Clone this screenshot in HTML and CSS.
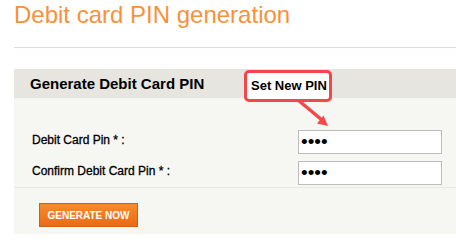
FILE: index.html
```html
<!DOCTYPE html>
<html>
<head>
<meta charset="utf-8">
<link rel="stylesheet" href="styles.css">
</head>
<body>
<h1 class="title">Debit card PIN generation</h1>
<div class="divider"></div>
<div class="panel">
  <div class="panel-head">Generate Debit Card PIN</div>
  <div class="panel-body">
    <form class="fields">
      <label class="lbl" for="pin1">Debit Card Pin * :</label>
      <input class="pin" id="pin1" type="password" value="1234">
      <label class="lbl" for="pin2">Confirm Debit Card Pin * :</label>
      <input class="pin" id="pin2" type="password" value="1234">
    </form>
    <div class="sep"></div>
    <div class="actions">
      <button class="btn" type="button">GENERATE NOW</button>
    </div>
  </div>
</div>
<svg class="arrow" width="50" height="32" viewBox="0 0 50 32">
  <line x1="8" y1="2" x2="32" y2="22" stroke="#f4474a" stroke-width="3.5"/>
  <polygon points="38,28 27,25.5 33.5,17.5" fill="#f4474a"/>
</svg>
<div class="callout">Set New PIN</div>
</body>
</html>
```

FILE: styles.css
```css
html, body {
  margin: 0;
  padding: 0;
  background: #ffffff;
  font-family: "Liberation Sans", Arial, sans-serif;
  width: 456px;
  height: 234px;
  overflow: hidden;
  position: relative;
}
.title {
  margin: 0 0 0 14px;
  font-size: 24px;
  font-weight: normal;
  line-height: 30px;
  color: #f7923a;
  white-space: nowrap;
}
.divider {
  margin: 17px 0 0 14px;
  height: 1px;
  background: #dcdcdc;
  box-shadow: 0 3px 7px rgba(0, 0, 0, 0.07);
}
.panel {
  margin: 21px 0 0 14px;
  background: #f6f6f2;
  height: 165px;
}
.panel-head {
  height: 29px;
  line-height: 29px;
  padding-left: 16px;
  background: #e6e5df;
  font-size: 15px;
  font-weight: bold;
  color: #000;
}
.fields {
  display: grid;
  grid-template-columns: 266px 144px;
  row-gap: 7px;
  margin: 0;
  padding: 32px 0 0 18px;
}
.lbl {
  font-size: 12px;
  line-height: 14px;
  margin-top: 3px;
  color: #000;
  -webkit-text-stroke: 0.3px #000;
}
.pin {
  box-sizing: border-box;
  width: 144px;
  height: 24px;
  margin: 0;
  padding: 0 0 0 2px;
  border: 1px solid #bcbcbc;
  background: #fff;
  font-family: "Liberation Sans", Arial, sans-serif;
  font-size: 19px;
  color: #000;
  outline: none;
}
.sep {
  margin-top: 2px;
  height: 1px;
  background: #e8e8e3;
}
.actions {
  padding: 15px 0 0 25px;
}
.btn {
  box-sizing: border-box;
  width: 99px;
  height: 24px;
  margin: 0;
  padding: 0;
  border: 1px solid #d0620f;
  background: linear-gradient(#f88c2c, #ea6a14);
  color: #fff;
  font-family: "Liberation Sans", Arial, sans-serif;
  font-size: 10px;
  font-weight: bold;
  cursor: pointer;
}
.arrow {
  position: absolute;
  left: 290px;
  top: 98px;
}
.callout {
  position: absolute;
  left: 244px;
  top: 70px;
  box-sizing: border-box;
  width: 88px;
  height: 32px;
  border: 3px solid #f4474a;
  border-radius: 5px;
  background: #fff;
  font-size: 13px;
  font-weight: bold;
  line-height: 26px;
  padding-left: 4px;
  color: #000;
  white-space: nowrap;
}
```
